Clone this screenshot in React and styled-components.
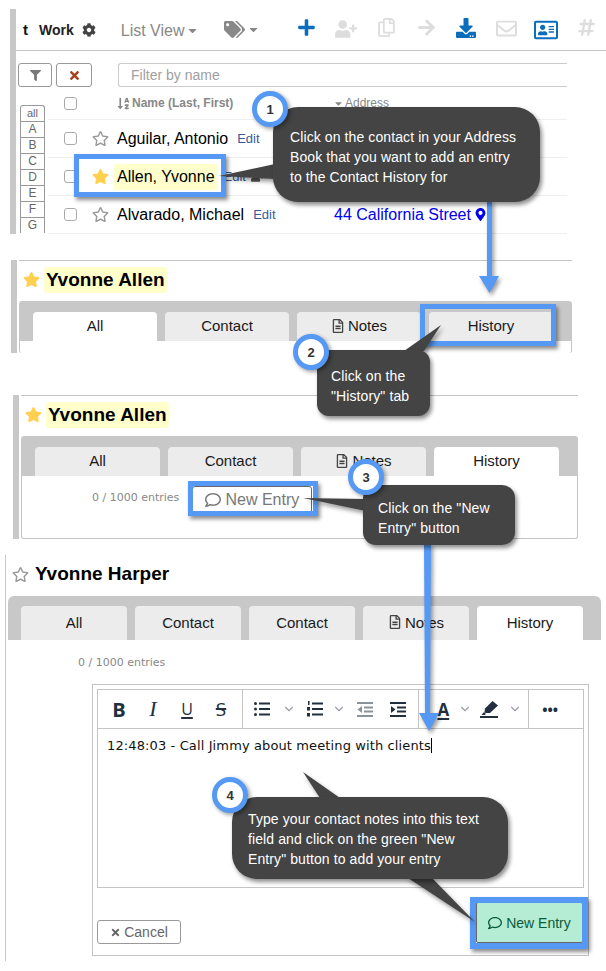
import React from "react";
import styled, { createGlobalStyle } from "styled-components";
import {
  FaCog, FaCaretDown, FaTags, FaPlus, FaUserPlus, FaRegCopy, FaArrowRight, FaDownload,
  FaRegEnvelope, FaRegAddressCard, FaHashtag, FaFilter, FaTimes, FaStar, FaRegStar,
  FaSortAlphaDown, FaMapMarkerAlt, FaRegFileAlt, FaRegComment,
} from "react-icons/fa";
import { FiChevronDown } from "react-icons/fi";

const BLUE = "#5599f5";
const DARK = "#444444";

const Global = createGlobalStyle`
  html, body { margin: 0; padding: 0; background: #fff; }
  body { font-family: "Liberation Sans", Arial, sans-serif; color: #111; }
`;

const Page = styled.div`
  position: relative;
  width: 606px;
  height: 971px;
  overflow: hidden;
  padding-top: 9px;
  box-sizing: border-box;
`;

/* ---- panel 1: address book ---- */
const ListPanel = styled.section`
  margin-left: 10px;
  height: 225px;
  border-left: 6px solid #c8c8c8;
  position: relative;
`;

const Toolbar = styled.div`
  height: 41px;
  display: flex;
  align-items: center;
  border-bottom: 1px solid #c4c4c4;
  padding-left: 7px;
`;

const Brand = styled.span`
  font-weight: bold;
  font-size: 15px;
  width: 16px;
`;

const BookName = styled.span`
  font-weight: bold;
  font-size: 14px;
  color: #222;
  margin-right: 8px;
`;

const ViewMenu = styled.span`
  display: flex;
  align-items: center;
  gap: 2px;
  font-size: 16px;
  color: #888;
  margin-left: 25px;
  margin-top: 2px;
  width: 103px;
`;

const ToolSlots = styled.div`
  display: flex;
  margin-left: auto;
`;

const ToolSlot = styled.span`
  width: 40px;
  display: flex;
  justify-content: center;
  color: ${(p) => p.$color};
  font-size: ${(p) => p.$size || 19}px;
`;

const FilterRow = styled.div`
  display: flex;
  align-items: stretch;
  height: 24px;
  margin: 12px 39px 0 2px;
`;

const SmallButton = styled.button`
  width: ${(p) => p.$width}px;
  margin-right: 4px;
  padding: 0;
  background: #fff;
  border: 1px solid #999;
  border-radius: 3px;
  display: flex;
  align-items: center;
  justify-content: center;
  color: ${(p) => p.$color};
  font-size: 11px;
`;

const FilterInput = styled.input`
  flex: 1;
  margin-left: 22px;
  min-width: 0;
  padding: 0 12px;
  border: 1px solid #ccc;
  border-right: 0;
  border-radius: 3px 0 0 3px;
  outline: 0;
  font: 14px "Liberation Sans", Arial, sans-serif;
  &::placeholder { color: #a0a0a0; opacity: 1; }
`;

const TableArea = styled.div`
  display: flex;
  margin: 4px 39px 0 4px;
`;

const Alphabet = styled.div`
  width: 25px;
  margin-top: 14px;
  display: flex;
  flex-direction: column;
  margin-right: 3px;
  flex: none;
`;

const Letter = styled.div`
  height: 16px;
  box-sizing: border-box;
  border: 1px solid #999;
  border-bottom: 0;
  border-radius: ${(p) => (p.$first ? "3px 3px 0 0" : "0")};
  font-size: ${(p) => (p.$first ? 11 : 12)}px;
  line-height: 15px;
  text-align: center;
  color: #666;
`;

const Table = styled.div`
  flex: 1;
  min-width: 0;
`;

const HeadRow = styled.div`
  height: 29px;
  display: flex;
  align-items: flex-start;
  padding: 6px 0 0 16px;
  box-sizing: border-box;
  border-bottom: 1px solid #eee;
  font-size: 12px;
  font-weight: bold;
  color: #888;
`;

const Check = styled.span`
  width: 11px;
  height: 11px;
  flex: none;
  border: 1px solid #aaa;
  border-radius: 3px;
  background: #fff;
`;

const SortLabel = styled.span`
  display: flex;
  align-items: center;
  gap: 2px;
  margin-left: 40px;
  width: 216px;
  margin-top: -1px;
`;

const AddressLabel = styled.span`
  display: flex;
  align-items: center;
  gap: 1px;
  margin-top: -1px;
  font-weight: normal;
`;

const Row = styled.div`
  height: 38px;
  box-sizing: border-box;
  display: flex;
  align-items: center;
  padding-left: 16px;
  border-bottom: 1px solid #eee;
`;

const StarCell = styled.span`
  width: 25px;
  margin-left: 15px;
  flex: none;
  display: flex;
  font-size: 17px;
  color: ${(p) => (p.$on ? "#ffd050" : "#999")};
`;

const Name = styled.span`
  font-size: 16px;
  color: #000;
  padding: 4px 3px;
  margin-left: -3px;
  background: ${(p) => (p.$on ? "#ffffcc" : "transparent")};
  border-radius: 2px;
`;

const EditLink = styled.span`
  font-size: 13px;
  color: #3b5a9a;
  margin-left: 6px;
`;

const AddressLink = styled.span`
  font-size: 16px;
  color: #0000ee;
  display: flex;
  align-items: center;
  gap: 3px;
  position: absolute;
  left: 318px;
`;

/* ---- contact panels ---- */
const ContactPanel = styled.section`
  margin-left: ${(p) => p.$left}px;
  height: ${(p) => p.$height}px;
  border-left: ${(p) => p.$bar}px solid #c8c8c8;
  padding-left: ${(p) => p.$gap}px;
  display: flex;
  flex-direction: column;
  margin-top: ${(p) => p.$top}px;
  margin-right: ${(p) => p.$right}px;
  box-sizing: border-box;
`;

const TitleRow = styled.div`
  height: ${(p) => p.$height}px;
  flex: none;
  box-sizing: border-box;
  border-top: ${(p) => (p.$lined ? "1px solid #c4c4c4" : "0")};
  display: flex;
  align-items: center;
  padding: 0 0 3px 4px;
  gap: 4px;
`;

const TitleStar = styled.span`
  display: flex;
  font-size: 17px;
  color: ${(p) => (p.$on ? "#ffd050" : "#999")};
`;

const Title = styled.h2`
  margin: 0;
  font-size: 19px;
  font-weight: bold;
  color: #000;
  padding: 2px;
  line-height: 22px;
  border-radius: 3px;
  background: ${(p) => (p.$on ? "#ffffcc" : "transparent")};
`;

const TabBar = styled.div`
  flex: none;
  height: ${(p) => p.$height}px;
  box-sizing: border-box;
  background: #c8c8c8;
  border-radius: ${(p) => p.$radius}px ${(p) => p.$radius}px 0 0;
  padding: ${(p) => p.$pad}px 0 0 ${(p) => p.$inset}px;
  display: flex;
  gap: ${(p) => p.$gap}px;
`;

const Tab = styled.div`
  width: ${(p) => p.$width}px;
  flex: none;
  box-sizing: border-box;
  padding-bottom: 2px;
  border-radius: 4px 4px 0 0;
  background: ${(p) => (p.$active ? "#fff" : "#ececec")};
  font-size: 15px;
  color: #1a1a1a;
  display: flex;
  align-items: center;
  justify-content: center;
  gap: 3px;
`;

const TabBody = styled.div`
  flex: 1;
  position: relative;
  border: 1px solid #c4c4c4;
  border-top: 0;
  border-bottom: ${(p) => (p.$closed ? "1px solid #c4c4c4" : "0")};
  border-radius: 0 0 3px 3px;
  display: flex;
  align-items: flex-start;
  padding: 10px 0 0 70px;
`;

const EntryCount = styled.span`
  font-family: "DejaVu Sans", Verdana, sans-serif;
  font-size: 11px;
  color: #888;
  margin-top: ${(p) => p.$top || 0}px;
`;

const EntryButton = styled.button`
  margin-left: 11px;
  width: 120px;
  height: 28px;
  padding: 0;
  background: #fff;
  border: 1px solid #666;
  border-radius: 3px;
  display: flex;
  align-items: center;
  justify-content: center;
  gap: 4px;
  font: 16px "Liberation Sans", Arial, sans-serif;
  color: #777;
  position: relative;
  left: 2px;
`;

const WhiteBody = styled.div`
  flex: 1;
  display: flex;
  flex-direction: column;
  padding: 16px 12px 5px 70px;
`;

const EditorBox = styled.div`
  margin: 15px 0 0 14px;
  flex: 1;
  border: 1px solid #c4c4c4;
  padding: 4px 4px 0 4px;
  display: flex;
  flex-direction: column;
`;

const EditorTools = styled.div`
  height: 38px;
  flex: none;
  border: 1px solid #c4c4c4;
  border-bottom: 0;
  display: flex;
  align-items: center;
`;

const ToolGroup = styled.div`
  height: 100%;
  width: ${(p) => p.$width}px;
  box-sizing: border-box;
  display: flex;
  align-items: center;
  border-right: ${(p) => (p.$open ? "0" : "1px solid #c4c4c4")};
  padding-left: ${(p) => p.$pad || 0}px;
`;

const Glyph = styled.span`
  width: ${(p) => p.$width || 34}px;
  flex: none;
  text-align: center;
  display: flex;
  justify-content: center;
  align-items: center;
  color: ${(p) => p.$color || "#222f3e"};
  font-family: ${(p) => (p.$serif ? '"Liberation Serif", serif' : '"Open Sans", sans-serif')};
  font-size: ${(p) => p.$size || 17}px;
  font-weight: ${(p) => (p.$bold ? 700 : 400)};
  font-style: ${(p) => (p.$italic ? "italic" : "normal")};
  text-decoration: ${(p) => p.$line || "none"};
  text-decoration-thickness: 2px;
  text-underline-offset: 2px;
`;

const Chevron = styled.span`
  width: ${(p) => p.$width || 20}px;
  flex: none;
  display: flex;
  justify-content: center;
  color: #9aa0a6;
  font-size: 14px;
`;

const EditorText = styled.div`
  height: 160px;
  flex: none;
  box-sizing: border-box;
  border: 1px solid #c4c4c4;
  padding: 9px 9px;
  font-family: "DejaVu Sans", Verdana, sans-serif;
  font-size: 13px;
  letter-spacing: 0.12px;
  line-height: 16px;
  color: #111;
`;

const Caret = styled.span`
  border-right: 1px solid #000;
`;

const EditorFooter = styled.div`
  flex: 1;
  display: flex;
  justify-content: space-between;
  align-items: flex-end;
  padding-bottom: 11px;
`;

const CancelButton = styled.button`
  width: 84px;
  height: 24px;
  padding: 0;
  background: #fff;
  border: 1px solid #999;
  border-radius: 3px;
  font: 14px "Liberation Sans", Arial, sans-serif;
  color: #666;
  display: flex;
  align-items: center;
  justify-content: center;
  gap: 3px;
`;

const SaveButton = styled.button`
  width: 107px;
  height: 41px;
  margin: 0 1px 1px 0;
  padding: 0;
  background: #b5ecd4;
  border: 1px solid #666;
  border-radius: 2px;
  font: 14px "Liberation Sans", Arial, sans-serif;
  color: #0b5a38;
  display: flex;
  align-items: center;
  justify-content: center;
  gap: 4px;
`;

/* ---- annotations on top of the screenshots ---- */
const Marks = styled.svg`
  position: absolute;
  inset: 0;
  width: 606px;
  height: 971px;
  pointer-events: none;
  filter: drop-shadow(2px 3px 2px rgba(0, 0, 0, 0.4));
`;

const Frame = styled.div`
  position: absolute;
  left: ${(p) => p.$x}px;
  top: ${(p) => p.$y}px;
  width: ${(p) => p.$w}px;
  height: ${(p) => p.$h}px;
  box-sizing: border-box;
  border: ${(p) => p.$weight || 5}px solid ${BLUE};
  box-shadow: 2px 3px 4px rgba(0, 0, 0, 0.45);
`;

const Callout = styled.div`
  position: absolute;
  left: ${(p) => p.$x}px;
  top: ${(p) => p.$y}px;
  width: ${(p) => p.$w}px;
  height: ${(p) => p.$h}px;
  box-sizing: border-box;
  background: ${DARK};
  color: #fff;
  border-radius: ${(p) => p.$radius}px;
  padding: ${(p) => p.$pt}px 0 0 ${(p) => p.$pl}px;
  font-size: 14px;
  letter-spacing: 0.1px;
  line-height: 20px;
  box-shadow: 2px 3px 4px rgba(0, 0, 0, 0.45);
`;

const Badge = styled.div`
  position: absolute;
  left: ${(p) => p.$cx - 18}px;
  top: ${(p) => p.$cy - 18}px;
  width: 36px;
  height: 36px;
  box-sizing: border-box;
  border: 5px solid ${BLUE};
  border-radius: 50%;
  background: #fff;
  color: #333;
  font-size: 13px;
  font-weight: bold;
  display: flex;
  align-items: center;
  justify-content: center;
  box-shadow: 2px 2px 4px rgba(0, 0, 0, 0.4);
`;

const letters = ["A", "B", "C", "D", "E", "F", "G"];

function MarkerIcon() {
  return (
    <svg width="20" height="18" viewBox="0 0 20 18" fill="#222f3e">
      <path d="M12.5 1 L18 5.5 L10 13 L5.5 13 L4.5 12 L5 8.5 Z" />
      <path d="M4 12 L6 14 L4.5 15 L1.5 15 Z" />
      <rect x="0" y="16" width="18" height="2" />
    </svg>
  );
}

function BulletsIcon() {
  return (
    <svg width="16" height="16" viewBox="0 0 16 16" fill="#222f3e">
      <circle cx="1.5" cy="2.5" r="1.5" /><circle cx="1.5" cy="8" r="1.5" /><circle cx="1.5" cy="13.5" r="1.5" />
      <rect x="5" y="1.5" width="11" height="2" /><rect x="5" y="7" width="11" height="2" /><rect x="5" y="12.5" width="11" height="2" />
    </svg>
  );
}

function NumbersIcon() {
  return (
    <svg width="16" height="16" viewBox="0 0 16 16" fill="#222f3e">
      <rect x="1" y="0" width="1.5" height="4" /><rect x="0" y="6" width="3" height="3.5" /><rect x="0" y="12" width="3" height="3.5" />
      <rect x="5" y="1.5" width="11" height="2" /><rect x="5" y="7" width="11" height="2" /><rect x="5" y="12.5" width="11" height="2" />
    </svg>
  );
}

function IndentIcon({ out }) {
  const fill = out ? "#8a929a" : "#222f3e";
  return (
    <svg width="16" height="15" viewBox="0 0 16 15" fill={fill}>
      <rect x="0" y="0" width="16" height="2" /><rect x="0" y="13" width="16" height="2" />
      <rect x="7" y="4.5" width="9" height="2" /><rect x="7" y="8.5" width="9" height="2" />
      {out ? <path d="M5 4 L0.5 7.5 L5 11 Z" /> : <path d="M1 4 L5.5 7.5 L1 11 Z" />}
    </svg>
  );
}

function ContactTabs({ active, width }) {
  const names = ["All", "Contact", "Notes", "History"];
  return names.map((n) => (
    <Tab key={n} $width={width} $active={n === active}>
      {n === "Notes" && <FaRegFileAlt color="#444" size={14} />}
      {n}
    </Tab>
  ));
}

export default function App() {
  return (
    <Page>
      <Global />
      <ListPanel>
        <Toolbar>
          <Brand>t</Brand>
          <BookName>Work</BookName>
          <FaCog size={14} color="#444" />
          <ViewMenu>
            List View <FaCaretDown size={13} />
          </ViewMenu>
          <FaTags size={21} color="#888" />
          <FaCaretDown size={13} color="#888" style={{ marginLeft: 2 }} />
          <ToolSlots>
            <ToolSlot $color="#0a6ebd"><FaPlus /></ToolSlot>
            <ToolSlot $color="#ddd"><FaUserPlus size={22} /></ToolSlot>
            <ToolSlot $color="#ddd"><FaRegCopy /></ToolSlot>
            <ToolSlot $color="#ddd"><FaArrowRight /></ToolSlot>
            <ToolSlot $color="#0a6ebd"><FaDownload size={20} /></ToolSlot>
            <ToolSlot $color="#ddd"><FaRegEnvelope size={21} /></ToolSlot>
            <ToolSlot $color="#0a6ebd"><FaRegAddressCard size={24} /></ToolSlot>
            <ToolSlot $color="#ddd"><FaHashtag /></ToolSlot>
          </ToolSlots>
        </Toolbar>
        <FilterRow>
          <SmallButton $width={34} $color="#777"><FaFilter /></SmallButton>
          <SmallButton $width={36} $color="#a5401e"><FaTimes size={13} /></SmallButton>
          <FilterInput placeholder="Filter by name" />
        </FilterRow>
        <TableArea>
          <Alphabet>
            <Letter $first>all</Letter>
            {letters.map((l) => (
              <Letter key={l}>{l}</Letter>
            ))}
          </Alphabet>
          <Table>
            <HeadRow>
              <Check />
              <SortLabel>
                <FaSortAlphaDown size={13} /> Name (Last, First)
              </SortLabel>
              <AddressLabel>
                <FaCaretDown size={11} /> Address
              </AddressLabel>
            </HeadRow>
            <Row>
              <Check />
              <StarCell><FaRegStar /></StarCell>
              <Name>Aguilar, Antonio</Name>
              <EditLink>Edit</EditLink>
            </Row>
            <Row>
              <Check />
              <StarCell $on><FaStar /></StarCell>
              <Name $on>Allen, Yvonne</Name>
              <EditLink>Edit</EditLink>
              <FaUserPlus size={13} color="#555" style={{ marginLeft: 5 }} />
            </Row>
            <Row>
              <Check />
              <StarCell><FaRegStar /></StarCell>
              <Name>Alvarado, Michael</Name>
              <EditLink>Edit</EditLink>
              <AddressLink>
                44 California Street <FaMapMarkerAlt size={13} />
              </AddressLink>
            </Row>
          </Table>
        </TableArea>
      </ListPanel>

      <ContactPanel $left={11} $top={26} $height={93} $bar={6} $gap={2} $right={34}>
        <TitleRow $height={41} $lined>
          <TitleStar $on><FaStar /></TitleStar>
          <Title $on>Yvonne Allen</Title>
        </TitleRow>
        <TabBar $height={40} $radius={3} $pad={11} $inset={14} $gap={8}>
          <ContactTabs active="All" width={124} />
        </TabBar>
        <TabBody />
      </ContactPanel>

      <ContactPanel $left={13} $top={42} $height={144} $bar={6} $gap={2} $right={28}>
        <TitleRow $height={41} $lined>
          <TitleStar $on><FaStar /></TitleStar>
          <Title $on>Yvonne Allen</Title>
        </TitleRow>
        <TabBar $height={40} $radius={3} $pad={11} $inset={14} $gap={8}>
          <ContactTabs active="History" width={125} />
        </TabBar>
        <TabBody $closed>
          <EntryCount $top={5}>0 / 1000 entries</EntryCount>
          <EntryButton>
            <FaRegComment size={16} /> New Entry
          </EntryButton>
        </TabBody>
      </ContactPanel>

      <ContactPanel $left={5} $top={16} $height={406} $bar={1} $gap={2} $right={5}>
        <TitleRow $height={41}>
          <TitleStar><FaRegStar /></TitleStar>
          <Title>Yvonne Harper</Title>
        </TitleRow>
        <TabBar $height={44} $radius={6} $pad={10} $inset={13} $gap={8}>
          <Tab $width={106}>All</Tab>
          <Tab $width={106}>Contact</Tab>
          <Tab $width={106}>Contact</Tab>
          <Tab $width={106}><FaRegFileAlt color="#444" size={14} />Notes</Tab>
          <Tab $width={106} $active>History</Tab>
        </TabBar>
        <WhiteBody>
          <EntryCount>0 / 1000 entries</EntryCount>
          <EditorBox>
            <EditorTools>
              <ToolGroup $width={145} $pad={4}>
                <Glyph $bold $size={20}>B</Glyph>
                <Glyph $serif $italic $size={22}>I</Glyph>
                <Glyph $line="underline" $size={16}>U</Glyph>
                <Glyph $line="line-through" $size={19}>S</Glyph>
              </ToolGroup>
              <ToolGroup $width={177} $pad={6}>
                <Glyph $width={26}><BulletsIcon /></Glyph>
                <Chevron $width={28}><FiChevronDown /></Chevron>
                <Glyph $width={24}><NumbersIcon /></Glyph>
                <Chevron $width={24}><FiChevronDown /></Chevron>
                <Glyph $width={28}><IndentIcon out /></Glyph>
                <Glyph $width={38}><IndentIcon /></Glyph>
              </ToolGroup>
              <ToolGroup $width={110} $pad={10}>
                <Glyph $width={28} $bold $size={17} $line="underline">A</Glyph>
                <Chevron $width={16}><FiChevronDown /></Chevron>
                <Glyph $width={34}><MarkerIcon /></Glyph>
                <Chevron $width={16}><FiChevronDown /></Chevron>
              </ToolGroup>
              <ToolGroup $width={54} $open>
                <Glyph $width={42} $bold $size={14}>•••</Glyph>
              </ToolGroup>
            </EditorTools>
            <EditorText>
              <Caret>12:48:03 - Call Jimmy about meeting with clients</Caret>
            </EditorText>
            <EditorFooter>
              <CancelButton><FaTimes size={11} color="#666" /> Cancel</CancelButton>
              <SaveButton><FaRegComment size={14} /> New Entry</SaveButton>
            </EditorFooter>
          </EditorBox>
        </WhiteBody>
      </ContactPanel>

      <Frame $x={74} $y={154} $w={152} $h={43} />
      <Frame $x={420} $y={304} $w={136} $h={42} />
      <Frame $x={188} $y={481} $w={130} $h={35} />
      <Frame $x={470} $y={897} $w={118} $h={52} $weight={6} />

      <Marks viewBox="0 0 606 971">
        <g fill={BLUE}>
          <rect x="487" y="200" width="5" height="78" />
          <path d="M479 276 L499 276 L489.5 293 Z" />
          <path d="M424 543 L431 543 L430 715 L425 715 Z" />
          <path d="M419 713 L439 713 L429 731 Z" />
        </g>
        <g fill={DARK}>
          <path d="M219 176 L275 164 L275 179 Z" />
          <path d="M441 325 L404 351 L424 351 Z" />
          <path d="M303 498 L366 499 L366 511 Z" />
          <path d="M303 772 L320 798 L340 798 Z" />
          <path d="M405 876 L430 876 L475 922 Z" />
        </g>
      </Marks>

      <Callout $x={273} $y={107} $w={267} $h={95} $radius={25} $pt={20} $pl={17}>
        Click on the contact in your Address<br />
        Book that you want to add an entry<br />
        to the Contact History for
      </Callout>
      <Callout $x={317} $y={350} $w={113} $h={66} $radius={12} $pt={16} $pl={14}>
        Click on the<br />
        "History" tab
      </Callout>
      <Callout $x={363} $y={485} $w={152} $h={60} $radius={13} $pt={13} $pl={15}>
        Click on the "New<br />
        Entry" button
      </Callout>
      <Callout $x={232} $y={797} $w={276} $h={82} $radius={25} $pt={12} $pl={16}>
        Type your contact notes into this text<br />
        field and click on the green "New<br />
        Entry" button to add your entry
      </Callout>

      <Badge $cx={270} $cy={109}>1</Badge>
      <Badge $cx={311} $cy={352}>2</Badge>
      <Badge $cx={366} $cy={477}>3</Badge>
      <Badge $cx={230} $cy={795}>4</Badge>
    </Page>
  );
}
